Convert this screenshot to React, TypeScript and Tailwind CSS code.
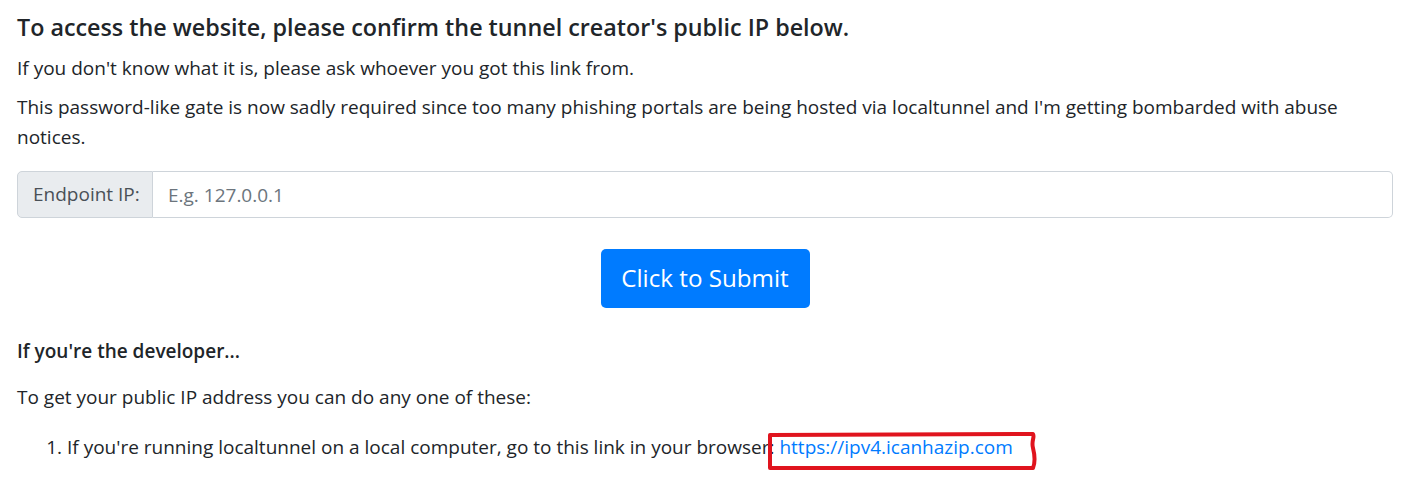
import React from "react";

export default function App() {
  return (
    <div
      className="min-h-[477px] bg-white px-[17px] pt-[9px] text-[#212529]"
      style={{ fontFamily: '"Open Sans", "Noto Sans", sans-serif' }}
    >
      <div className="w-[1376px]">
        <h5 className="text-[23.3px] font-semibold leading-[36px] mb-[8px]">
          To access the website, please confirm the tunnel creator's public IP below.
        </h5>
        <p className="text-[19px] leading-[30px] mb-[9px]">
          If you don't know what it is, please ask whoever you got this link from.
        </p>
        <p className="text-[19px] leading-[30px] mb-[19px]">
          This password-like gate is now sadly required since too many phishing portals are being hosted via localtunnel and I'm getting bombarded with abuse notices.
        </p>

        <div className="flex h-[47px] w-full">
          <div className="flex w-[136px] shrink-0 items-center whitespace-nowrap rounded-l-[5px] border border-[#ced4da] bg-[#e9ecef] px-[15px] text-[19px] text-[#495057]">
            Endpoint IP:
          </div>
          <input
            type="text"
            placeholder="E.g. 127.0.0.1"
            className="h-full min-w-0 flex-1 rounded-r-[5px] border border-l-0 border-[#ced4da] bg-white px-[15px] text-[19px] text-[#495057] placeholder:text-[#6c757d] outline-none"
          />
        </div>

        <div className="mt-[31px] flex justify-center">
          <button className="h-[59px] w-[209px] rounded-[5px] bg-[#007bff] text-[24.2px] text-white">
            Click to Submit
          </button>
        </div>

        <h6 className="mt-[28px] text-[19px] font-semibold leading-[30px]">
          If you're the developer...
        </h6>
        <p className="mt-[16px] text-[19px] leading-[30px]">
          To get your public IP address you can do any one of these:
        </p>
        <ol className="mt-[20px] list-decimal pl-[50px] text-[19px] leading-[30px]">
          <li>
            If you're running localtunnel on a local computer, go to this link in your browser:{" "}
            <span className="relative inline-block">
              <a href="#" className="text-[#007bff]">
                https://ipv4.icanhazip.com
              </a>
              <svg
                className="pointer-events-none absolute left-[-12px] top-[-1px]"
                width="272"
                height="40"
                viewBox="0 0 272 40"
                fill="none"
              >
                <path
                  d="M3 4 L266 3 C268 6 264 10 266 17 C268 25 268 32 266 37 L3 37 Z"
                  stroke="#e0141e"
                  strokeWidth="4"
                  strokeLinejoin="round"
                />
              </svg>
            </span>
          </li>
        </ol>
      </div>
    </div>
  );
}
